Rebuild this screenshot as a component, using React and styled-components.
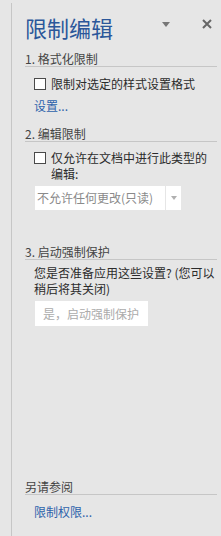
import React from "react";
import styled, { createGlobalStyle } from "styled-components";

const Global = createGlobalStyle`
  html, body {
    margin: 0;
    padding: 0;
    background: #e6e6e6;
  }
  body {
    font-family: "Noto Sans CJK SC", "Microsoft YaHei", sans-serif;
    font-size: 12px;
    color: #2b2b2b;
  }
  * { box-sizing: border-box; }
`;

const Page = styled.div`
  height: 536px;
  padding: 3px 0 0 11px;
  display: flex;
  background: #e6e6e6;
`;

const Panel = styled.div`
  flex: 1;
  display: flex;
  flex-direction: column;
  border-left: 1px solid #c6c6c6;
  padding: 0 4px 16px 13px;
`;

const Header = styled.div`
  display: flex;
  align-items: flex-start;
  height: 46px;
`;

const Title = styled.h1`
  flex: 1;
  margin: 11px 0 0;
  font-size: 22px;
  line-height: 26px;
  font-weight: 400;
  color: #2b579a;
`;

const DropArrow = styled.span`
  width: 0;
  height: 0;
  margin-top: 19px;
  border-left: 4.5px solid transparent;
  border-right: 4.5px solid transparent;
  border-top: 5px solid #777;
`;

const CloseBtn = styled.svg`
  width: 10px;
  height: 10px;
  margin: 16px 5px 0 32px;
`;

const SectionTitle = styled.div`
  margin-top: ${(p) => p.$mt}px;
  font-size: 12px;
  line-height: 14px;
  color: #444;
  border-bottom: 1px solid #c6c6c6;
`;

const CheckRow = styled.label`
  display: flex;
  align-items: flex-start;
  gap: 5px;
  margin-top: ${(p) => p.$mt}px;
  padding-left: 9px;
  line-height: 16px;
  color: #2b2b2b;
`;

const Box = styled.span`
  flex: none;
  width: 12px;
  height: 12px;
  margin-top: 2px;
  background: #fff;
  border: 1px solid #4a4a4a;
`;

const Link = styled.a`
  display: block;
  margin-top: ${(p) => p.$mt}px;
  padding-left: 9px;
  line-height: 16px;
  color: #2e63ab;
  text-decoration: none;
`;

const SelectWrap = styled.div`
  display: flex;
  gap: 1px;
  margin: 4px 0 0 10px;
  height: 24px;
`;

const SelectValue = styled.div`
  width: 130px;
  background: #fff;
  color: #8a8a8a;
  line-height: 24px;
  padding-left: 2px;
`;

const SelectArrow = styled.div`
  width: 15px;
  background: #fff;
  display: flex;
  align-items: center;
  justify-content: center;
  &::after {
    content: "";
    border-left: 3.5px solid transparent;
    border-right: 3.5px solid transparent;
    border-top: 4px solid #b0b0b0;
  }
`;

const Para = styled.p`
  margin: 5px 0 0;
  padding-left: 9px;
  line-height: 16px;
  color: #2b2b2b;
`;

const Button = styled.button`
  align-self: flex-start;
  margin: 4px 0 0 10px;
  height: 25px;
  width: 113px;
  padding: 0 8px;
  border: none;
  background: #fff;
  color: #ababab;
  font-family: inherit;
  font-size: 12px;
  text-align: left;
`;

const Bottom = styled.div`
  margin-top: auto;
  display: flex;
  flex-direction: column;
`;

export default function App() {
  return (
    <>
      <Global />
      <Page>
        <Panel>
          <Header>
            <Title>限制编辑</Title>
            <DropArrow />
            <CloseBtn viewBox="0 0 10 10">
              <path d="M1 1L9 9M9 1L1 9" stroke="#666" strokeWidth="2" />
            </CloseBtn>
          </Header>

          <SectionTitle $mt={3}>1. 格式化限制</SectionTitle>
          <CheckRow $mt={9}>
            <Box />
            <span>限制对选定的样式设置格式</span>
          </CheckRow>
          <Link $mt={6}>设置...</Link>

          <SectionTitle $mt={13}>2. 编辑限制</SectionTitle>
          <CheckRow $mt={8}>
            <Box />
            <span>仅允许在文档中进行此类型的编辑:</span>
          </CheckRow>
          <SelectWrap>
            <SelectValue>不允许任何更改(只读)</SelectValue>
            <SelectArrow />
          </SelectWrap>

          <SectionTitle $mt={35}>3. 启动强制保护</SectionTitle>
          <Para>您是否准备应用这些设置? (您可以稍后将其关闭)</Para>
          <Button>是，启动强制保护</Button>

          <Bottom>
            <SectionTitle $mt={0}>另请参阅</SectionTitle>
            <Link $mt={9}>限制权限...</Link>
          </Bottom>
        </Panel>
      </Page>
    </>
  );
}
